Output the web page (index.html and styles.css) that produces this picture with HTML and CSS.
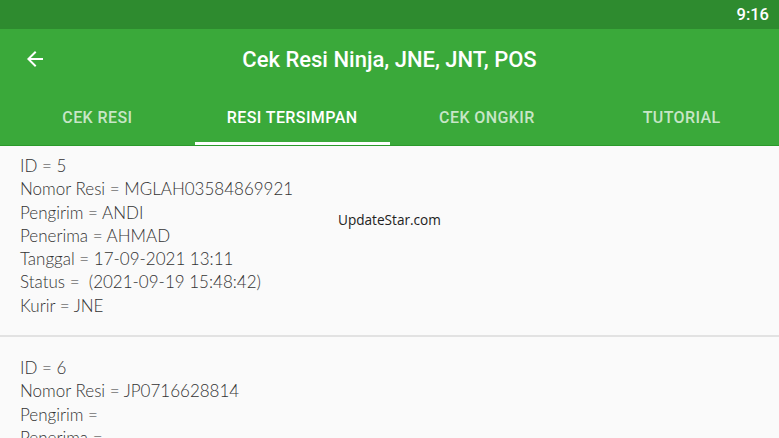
FILE: index.html
```html
<!DOCTYPE html>
<html>
<head>
<meta charset="utf-8">
<link rel="stylesheet" href="styles.css">
</head>
<body>
<div class="statusbar"><span class="time">9:16</span></div>
<header class="appbar">
  <div class="toolbar">
    <svg class="back" width="24" height="24" viewBox="0 0 24 24"><path d="M20 11H7.83l5.59-5.59L12 4l-8 8 8 8 1.41-1.41L7.83 13H20v-2z" fill="#fff"/></svg>
    <h1 class="title">Cek Resi Ninja, JNE, JNT, POS</h1>
  </div>
  <nav class="tabs">
    <div class="tab">CEK RESI</div>
    <div class="tab active">RESI TERSIMPAN</div>
    <div class="tab">CEK ONGKIR</div>
    <div class="tab">TUTORIAL</div>
  </nav>
</header>
<main class="content">
  <div class="card first">
    <div class="line">ID = 5</div>
    <div class="line">Nomor Resi = MGLAH03584869921</div>
    <div class="line">Pengirim = ANDI</div>
    <div class="line">Penerima = AHMAD</div>
    <div class="line">Tanggal = 17-09-2021 13:11</div>
    <div class="line">Status = &nbsp;(2021-09-19 15:48:42)</div>
    <div class="line">Kurir = JNE</div>
  </div>
  <div class="divider"></div>
  <div class="card second">
    <div class="line">ID = 6</div>
    <div class="line">Nomor Resi = JP0716628814</div>
    <div class="line">Pengirim = </div>
    <div class="line">Penerima = </div>
  </div>
  <div class="watermark">UpdateStar.com</div>
</main>
</body>
</html>
```
FILE: styles.css
```css
* { box-sizing: border-box; }
html, body { margin: 0; padding: 0; }
body {
  width: 779px;
  height: 438px;
  overflow: hidden;
  background: #fafafa;
  font-family: Roboto, "Noto Sans", sans-serif;
}
.statusbar {
  height: 29px;
  background: #2e8b2f;
  display: flex;
  justify-content: flex-end;
  align-items: center;
  padding-right: 10px;
}
.time {
  color: #fff;
  font-weight: 500;
  font-size: 16.5px;
}
.appbar {
  background: #3aa93a;
  box-shadow: 0 1px 0 #2a9a2a;
}
.toolbar {
  height: 60px;
  display: flex;
  align-items: center;
  padding-left: 23px;
}
.back { display: block; }
.title {
  flex: 1;
  margin: 0 0 0 -47px;
  text-align: center;
  color: #fff;
  font-size: 22px;
  font-weight: 500;
}
.tabs {
  height: 56px;
  display: grid;
  grid-template-columns: repeat(4, 1fr);
}
.tab {
  display: flex;
  align-items: center;
  justify-content: center;
  color: rgba(255,255,255,0.72);
  font-size: 16px;
  font-weight: 500;
  letter-spacing: 0.4px;
  border-bottom: 3px solid transparent;
  padding-top: 3px;
}
.tab.active {
  color: #fff;
  border-bottom-color: #fff;
}
.content {
  position: relative;
  color: #333;
  font-family: Lato, "Open Sans", sans-serif;
  font-weight: 300;
  font-size: 17px;
  line-height: 23.3px;
}
.card { padding: 9px 20px 18px; }
.card.second { padding-top: 19px; }
.divider { height: 2px; background: #e2e2e2; }
.watermark {
  position: absolute;
  left: 338px;
  top: 66px;
  font-family: "Open Sans", sans-serif;
  font-weight: 400;
  font-size: 13.6px;
  color: #222;
  line-height: 18px;
}
```
